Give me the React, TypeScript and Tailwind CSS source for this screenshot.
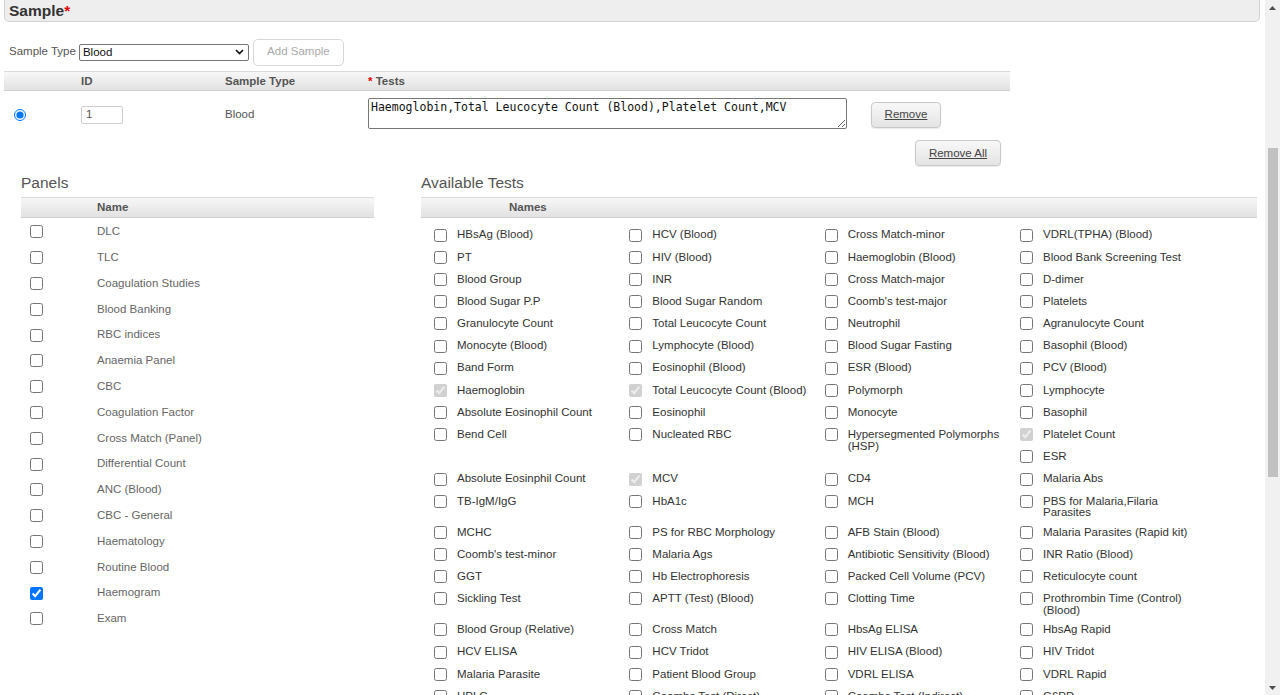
import React from "react";

type Item = { label: string; checked?: boolean };
type Cell = Item[];

const t = (label: string, checked = false): Item => ({ label, checked });

const rows: Cell[][] = [
  [[t("HBsAg (Blood)")], [t("HCV (Blood)")], [t("Cross Match-minor")], [t("VDRL(TPHA) (Blood)")]],
  [[t("PT")], [t("HIV (Blood)")], [t("Haemoglobin (Blood)")], [t("Blood Bank Screening Test")]],
  [[t("Blood Group")], [t("INR")], [t("Cross Match-major")], [t("D-dimer")]],
  [[t("Blood Sugar P.P")], [t("Blood Sugar Random")], [t("Coomb's test-major")], [t("Platelets")]],
  [[t("Granulocyte Count")], [t("Total Leucocyte Count")], [t("Neutrophil")], [t("Agranulocyte Count")]],
  [[t("Monocyte (Blood)")], [t("Lymphocyte (Blood)")], [t("Blood Sugar Fasting")], [t("Basophil (Blood)")]],
  [[t("Band Form")], [t("Eosinophil (Blood)")], [t("ESR (Blood)")], [t("PCV (Blood)")]],
  [[t("Haemoglobin", true)], [t("Total Leucocyte Count (Blood)", true)], [t("Polymorph")], [t("Lymphocyte")]],
  [[t("Absolute Eosinophil Count")], [t("Eosinophil")], [t("Monocyte")], [t("Basophil")]],
  [[t("Bend Cell")], [t("Nucleated RBC")], [t("Hypersegmented Polymorphs (HSP)")], [t("Platelet Count", true), t("ESR")]],
  [[t("Absolute Eosinphil Count")], [t("MCV", true)], [t("CD4")], [t("Malaria Abs")]],
  [[t("TB-IgM/IgG")], [t("HbA1c")], [t("MCH")], [t("PBS for Malaria,Filaria Parasites")]],
  [[t("MCHC")], [t("PS for RBC Morphology")], [t("AFB Stain (Blood)")], [t("Malaria Parasites (Rapid kit)")]],
  [[t("Coomb's test-minor")], [t("Malaria Ags")], [t("Antibiotic Sensitivity (Blood)")], [t("INR Ratio (Blood)")]],
  [[t("GGT")], [t("Hb Electrophoresis")], [t("Packed Cell Volume (PCV)")], [t("Reticulocyte count")]],
  [[t("Sickling Test")], [t("APTT (Test) (Blood)")], [t("Clotting Time")], [t("Prothrombin Time (Control) (Blood)")]],
  [[t("Blood Group (Relative)")], [t("Cross Match")], [t("HbsAg ELISA")], [t("HbsAg Rapid")]],
  [[t("HCV ELISA")], [t("HCV Tridot")], [t("HIV ELISA (Blood)")], [t("HIV Tridot")]],
  [[t("Malaria Parasite")], [t("Patient Blood Group")], [t("VDRL ELISA")], [t("VDRL Rapid")]],
  [[t("HPLC")], [t("Coombs Test (Direct)")], [t("Coombs Test (Indirect)")], [t("G6PD")]],
];

const panels = [
  "DLC",
  "TLC",
  "Coagulation Studies",
  "Blood Banking",
  "RBC indices",
  "Anaemia Panel",
  "CBC",
  "Coagulation Factor",
  "Cross Match (Panel)",
  "Differential Count",
  "ANC (Blood)",
  "CBC - General",
  "Haematology",
  "Routine Blood",
  "Haemogram",
  "Exam",
];

const headerBg =
  "bg-linear-to-b from-[#f7f7f7] to-[#e2e2e2] border-t border-b border-t-[#dadada] border-b-[#d0d0d0]";

function TestItem({ item }: { item: Item }) {
  return (
    <div className="flex items-start">
      <div className="flex h-[22.2px] w-[23px] shrink-0 items-center">
        <input
          type="checkbox"
          className="h-[13px] w-[13px]"
          checked={!!item.checked}
          disabled={!!item.checked}
          readOnly
        />
      </div>
      <div className="w-[160px] pt-[5.35px] pb-[2.65px] text-[11.5px] leading-[11.5px] text-[#333]">
        {item.label}
      </div>
    </div>
  );
}

function Scrollbar() {
  return (
    <div className="flex h-full w-[15px] shrink-0 flex-col bg-[#f1f1f1]">
      <div className="flex h-[15px] items-center justify-center">
        <svg width="7" height="4" viewBox="0 0 7 4">
          <path d="M0 4 L3.5 0 L7 4 Z" fill="#505050" />
        </svg>
      </div>
      <div className="h-[133px]" />
      <div className="mx-auto h-[329px] w-[10px] bg-[#c1c1c1]" />
      <div className="flex-1" />
      <div className="flex h-[15px] items-center justify-center">
        <svg width="7" height="4" viewBox="0 0 7 4">
          <path d="M0 0 L3.5 4 L7 0 Z" fill="#505050" />
        </svg>
      </div>
    </div>
  );
}

export default function App() {
  return (
    <div className="flex h-[695px] w-[1280px] overflow-hidden bg-white font-['Liberation_Sans',Arial,sans-serif] text-[11.5px] text-[#555]">
      <main className="min-w-0 flex-1 overflow-hidden">
        {/* Section header */}
        <div className="-mt-[10px] ml-[4px] flex h-[32px] w-[1256px] items-center rounded-[5px] border border-[#d2d2d2] bg-[#eeeeee] pt-[10px] pl-[4px]">
          <span className="text-[15.5px] font-bold leading-[18px] text-[#333]">
            Sample<span className="text-[#e00000]">*</span>
          </span>
        </div>

        {/* Sample type row */}
        <div className="mt-[16px] flex h-[27px] items-center pl-[9px] pt-[1px]">
          <span className="text-[#555]">Sample Type</span>
          <div className="ml-[3px] flex h-[17px] w-[170px] items-center justify-between rounded-[2px] border border-[#767676] bg-white pr-[4px] pl-[3px] text-[#111]">
            <span className="leading-[15px]">Blood</span>
            <svg width="9" height="6" viewBox="0 0 9 6">
              <path d="M1 1 L4.5 4.5 L8 1" fill="none" stroke="#111" strokeWidth="1.7" />
            </svg>
          </div>
          <button className="ml-[4px] h-[27px] w-[91px] rounded-[5px] border border-[#d8d8d8] bg-white text-[11.5px] text-[#aaa]">
            Add Sample
          </button>
        </div>

        {/* Sample table */}
        <div className="mt-[6px] ml-[4px] w-[1006px]">
          <div className={`grid h-[20px] grid-cols-[77px_144px_143px_503px_1fr] items-center pt-[1px] font-bold text-[#555] ${headerBg}`}>
            <div />
            <div>ID</div>
            <div>Sample Type</div>
            <div>
              <span className="text-[#e00000]">*</span> Tests
            </div>
            <div />
          </div>
          <div className="grid h-[44px] grid-cols-[77px_144px_143px_503px_1fr] items-center">
            <div className="pl-[10px] pt-[3px]">
              <input type="radio" className="block h-[12px] w-[12px]" checked readOnly />
            </div>
            <div className="pt-[3px]">
              <div className="flex h-[18px] w-[42px] items-center rounded-[2px] border border-[#cfcfcf] bg-white pl-[4px] text-[#555]">
                1
              </div>
            </div>
            <div className="pt-[3px] text-[#555]">Blood</div>
            <div>
              <textarea
                readOnly
                value="Haemoglobin,Total Leucocyte Count (Blood),Platelet Count,MCV"
                className="block h-[31px] w-[479px] rounded-[2px] border border-[#767676] bg-white px-[2px] py-[2px] font-['DejaVu_Sans_Mono',monospace] text-[11.5px] leading-[13px] text-[#111]"
              />
            </div>
            <div className="pt-[3px]">
              <button className="h-[26px] w-[70px] rounded-[4px] border border-[#c8c8c8] bg-linear-to-b from-[#f8f8f8] to-[#e4e4e4] text-[11.5px] text-[#444] underline shadow-[0_1px_1px_rgba(0,0,0,0.08)]">
                Remove
              </button>
            </div>
          </div>
        </div>

        {/* Remove all */}
        <div className="mt-[5px] ml-[915px]">
          <button className="h-[26px] w-[86px] rounded-[4px] border border-[#c8c8c8] bg-linear-to-b from-[#f8f8f8] to-[#e4e4e4] pt-[1px] text-[11.5px] text-[#444] underline shadow-[0_1px_1px_rgba(0,0,0,0.08)]">
            Remove All
          </button>
        </div>

        {/* Panels and tests */}
        <div className="mt-[8px] flex">
          <section className="ml-[21px] w-[353px] shrink-0">
            <h2 className="h-[18px] text-[15.5px] leading-[18px] text-[#555]">Panels</h2>
            <div className={`mt-[5px] flex h-[21px] items-center pt-[1px] pl-[76px] font-bold text-[#555] ${headerBg}`}>
              Name
            </div>
            <div className="pt-[1px]">
              {panels.map((p) => (
                <div key={p} className="flex h-[25.8px] items-center">
                  <div className="flex w-[76px] items-center pl-[9px]">
                    <input
                      type="checkbox"
                      className="h-[13px] w-[13px]"
                      checked={p === "Haemogram"}
                      readOnly
                    />
                  </div>
                  <span className="text-[#666]">{p}</span>
                </div>
              ))}
            </div>
          </section>

          <section className="ml-[47px] w-[836px] shrink-0">
            <h2 className="h-[18px] text-[15.5px] leading-[18px] text-[#555]">Available Tests</h2>
            <div className={`mt-[5px] flex h-[21px] items-center pt-[1px] pl-[88px] font-bold text-[#555] ${headerBg}`}>
              Names
            </div>
            <div className="pt-[6px] pl-[13px]">
              {rows.map((row, ri) => (
                <div key={ri} className="grid grid-cols-[repeat(4,195.33px)] items-start">
                  {row.map((cell, ci) => (
                    <div key={ci} className="flex flex-col">
                      {cell.map((item) => (
                        <TestItem key={item.label} item={item} />
                      ))}
                    </div>
                  ))}
                </div>
              ))}
            </div>
          </section>
        </div>
      </main>
      <Scrollbar />
    </div>
  );
}
